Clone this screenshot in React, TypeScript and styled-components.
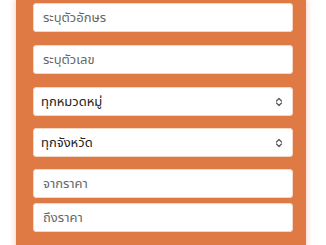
import React from "react";
import styled, { createGlobalStyle } from "styled-components";

const Global = createGlobalStyle`
  html, body { margin: 0; padding: 0; background: #ffffff; }
  body { font-family: "Noto Sans Thai", "Noto Sans", "DejaVu Sans", sans-serif; }
  * { box-sizing: border-box; }
`;

const Page = styled.div`
  width: 326px;
  height: 245px;
  overflow: hidden;
  padding-left: 16px;
`;

const Panel = styled.form`
  width: 290px;
  height: 260px;
  background: #e07a44;
  box-shadow: 0 0 6px 1px rgba(240, 150, 130, 0.45);
  padding: 3px 13px 0 17px;
  display: flex;
  flex-direction: column;
`;

const Field = styled.div<{ $gap: number }>`
  margin-bottom: ${(p) => p.$gap}px;
`;

const TextInput = styled.input`
  display: block;
  width: 260px;
  height: 29px;
  border: 1px solid #f3d7c6;
  border-radius: 3px;
  background: #ffffff;
  padding: 0 9px;
  font-family: inherit;
  font-size: 13px;
  color: #333;
  outline: none;
  &::placeholder { color: #666666; }
`;

const SelectBox = styled.div`
  position: relative;
  width: 260px;
  height: 29px;
  border: 1px solid #f3d7c6;
  border-radius: 3px;
  background: #ffffff;
  display: flex;
  align-items: center;
  padding: 0 9px 0 7px;
  font-size: 13px;
  font-weight: 400;
  color: #222;
`;

const SelectLabel = styled.span`
  flex: 1;
`;

const Chevrons = () => (
  <svg width="8" height="10" viewBox="0 0 8 10" fill="none" stroke="#555" strokeWidth="1.2" strokeLinecap="round" strokeLinejoin="round">
    <path d="M1.5 4 L4 1.5 L6.5 4" />
    <path d="M1.5 6 L4 8.5 L6.5 6" />
  </svg>
);

export default function App() {
  return (
    <>
      <Global />
      <Page>
        <Panel>
          <Field $gap={13}><TextInput placeholder="ระบุตัวอักษร" /></Field>
          <Field $gap={13}><TextInput placeholder="ระบุตัวเลข" /></Field>
          <Field $gap={12}>
            <SelectBox><SelectLabel>ทุกหมวดหมู่</SelectLabel><Chevrons /></SelectBox>
          </Field>
          <Field $gap={12}>
            <SelectBox><SelectLabel>ทุกจังหวัด</SelectLabel><Chevrons /></SelectBox>
          </Field>
          <Field $gap={5}><TextInput placeholder="จากราคา" /></Field>
          <Field $gap={0}><TextInput placeholder="ถึงราคา" /></Field>
        </Panel>
      </Page>
    </>
  );
}
